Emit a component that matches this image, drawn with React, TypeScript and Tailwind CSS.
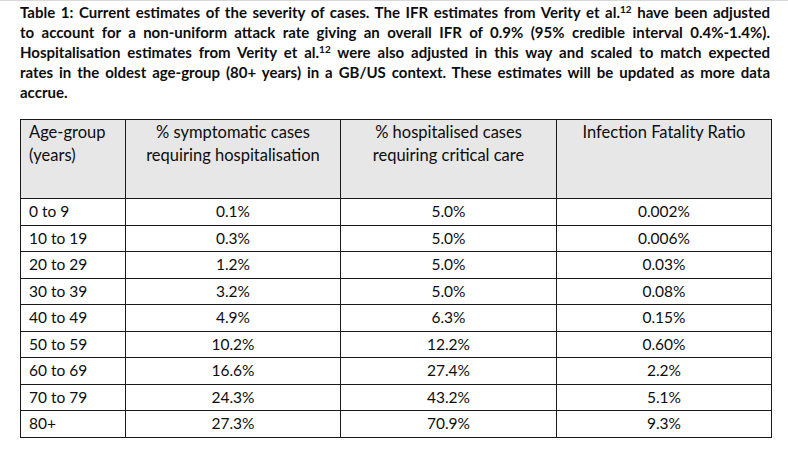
const lines: React.ReactNode[] = [
  <>Table 1: Current estimates of the severity of cases. The IFR estimates from Verity et al.<sup className="text-[10px]">12</sup> have been adjusted</>,
  <>to account for a non-uniform attack rate giving an overall IFR of 0.9% (95% credible interval 0.4%-1.4%).</>,
  <>Hospitalisation estimates from Verity et al.<sup className="text-[10px]">12</sup> were also adjusted in this way and scaled to match expected</>,
  <>rates in the oldest age-group (80+ years) in a GB/US context. These estimates will be updated as more data</>,
];

const rows: [string, string, string, string][] = [
  ["0 to 9", "0.1%", "5.0%", "0.002%"],
  ["10 to 19", "0.3%", "5.0%", "0.006%"],
  ["20 to 29", "1.2%", "5.0%", "0.03%"],
  ["30 to 39", "3.2%", "5.0%", "0.08%"],
  ["40 to 49", "4.9%", "6.3%", "0.15%"],
  ["50 to 59", "10.2%", "12.2%", "0.60%"],
  ["60 to 69", "16.6%", "27.4%", "2.2%"],
  ["70 to 79", "24.3%", "43.2%", "5.1%"],
  ["80+", "27.3%", "70.9%", "9.3%"],
];

export default function App() {
  return (
    <div className="w-[788px] h-[457px] bg-white text-[#0d0d0d] font-['Lato','Open_Sans',sans-serif] overflow-hidden border-t border-[#d8d8d8]">
      {/* Caption */}
      <div className="pl-5 pr-[18px] pt-[1px] text-[15px] font-bold leading-[20px]">
        {lines.map((l, i) => (
          <div key={i} className="text-justify [text-align-last:justify]">
            {l}
          </div>
        ))}
        <div>accrue.</div>
      </div>

      {/* Table */}
      <table className="ml-5 mt-[17px] w-[751px] border-collapse table-fixed">
        <colgroup>
          <col className="w-[105px]" />
          <col className="w-[215px]" />
          <col className="w-[216px]" />
          <col className="w-[215px]" />
        </colgroup>
        <thead>
          <tr className="bg-[#e7e7e7] h-[79px] align-top text-[16.5px] leading-[23px]">
            <th className="border border-[#1a1a1a] font-normal text-left pl-2 pt-[1px]">
              Age-group
              <br />
              (years)
            </th>
            <th className="border border-[#1a1a1a] font-normal text-center pt-[1px]">
              % symptomatic cases
              <br />
              requiring hospitalisation
            </th>
            <th className="border border-[#1a1a1a] font-normal text-center pt-[1px]">
              % hospitalised cases
              <br />
              requiring critical care
            </th>
            <th className="border border-[#1a1a1a] font-normal text-center pt-[1px]">
              Infection Fatality Ratio
            </th>
          </tr>
        </thead>
        <tbody className="text-[15.5px]">
          {rows.map((r) => (
            <tr key={r[0]} className="h-[26.5px]">
              <td className="border border-[#1a1a1a] pl-2 leading-none">{r[0]}</td>
              <td className="border border-[#1a1a1a] text-center leading-none">{r[1]}</td>
              <td className="border border-[#1a1a1a] text-center leading-none">{r[2]}</td>
              <td className="border border-[#1a1a1a] text-center leading-none">{r[3]}</td>
            </tr>
          ))}
        </tbody>
      </table>
    </div>
  );
}
